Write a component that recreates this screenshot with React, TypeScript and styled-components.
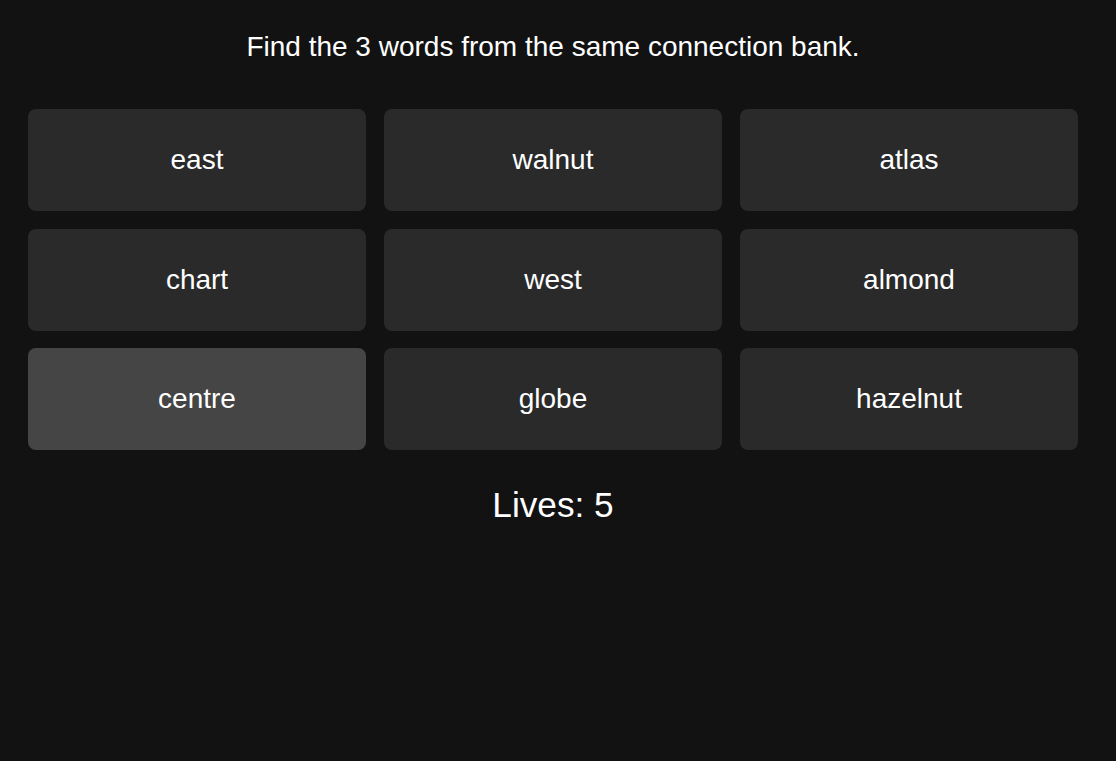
import React from "react";
import styled, { createGlobalStyle } from "styled-components";

const GlobalStyle = createGlobalStyle`
  html, body {
    margin: 0;
    padding: 0;
    background: #121212;
    color: #ffffff;
    font-family: "Liberation Sans", Arial, sans-serif;
  }
  body {
    min-height: 761px;
  }
`;

const Page = styled.main`
  box-sizing: border-box;
  width: 1116px;
  min-height: 761px;
  padding: 31px 38px 0 28px;
  display: flex;
  flex-direction: column;
  align-items: stretch;
`;

const Prompt = styled.h1`
  margin: 0 0 46px;
  font-size: 28px;
  line-height: 32px;
  font-weight: 400;
  text-align: center;
  color: #ffffff;
`;

const Grid = styled.div`
  display: grid;
  grid-template-columns: repeat(3, 1fr);
  column-gap: 18px;
  row-gap: 17.5px;
  width: 1050px;
`;

const Tile = styled.button<{ $selected?: boolean }>`
  height: 102px;
  border: none;
  border-radius: 8px;
  background: ${(p) => (p.$selected ? "#454545" : "#2a2a2a")};
  color: #ffffff;
  font-family: "Liberation Sans", Arial, sans-serif;
  font-size: 28px;
  display: flex;
  align-items: center;
  justify-content: center;
  padding: 0;
  cursor: pointer;
`;

const Lives = styled.div`
  margin-top: 35px;
  width: 1050px;
  text-align: center;
  font-size: 35.2px;
  line-height: 40px;
`;

const words = [
  "east",
  "walnut",
  "atlas",
  "chart",
  "west",
  "almond",
  "centre",
  "globe",
  "hazelnut",
];

export default function App() {
  return (
    <>
      <GlobalStyle />
      <Page>
        <Prompt>Find the 3 words from the same connection bank.</Prompt>
        <Grid>
          {words.map((w) => (
            <Tile key={w} $selected={w === "centre"}>
              {w}
            </Tile>
          ))}
        </Grid>
        <Lives>Lives: 5</Lives>
      </Page>
    </>
  );
}
